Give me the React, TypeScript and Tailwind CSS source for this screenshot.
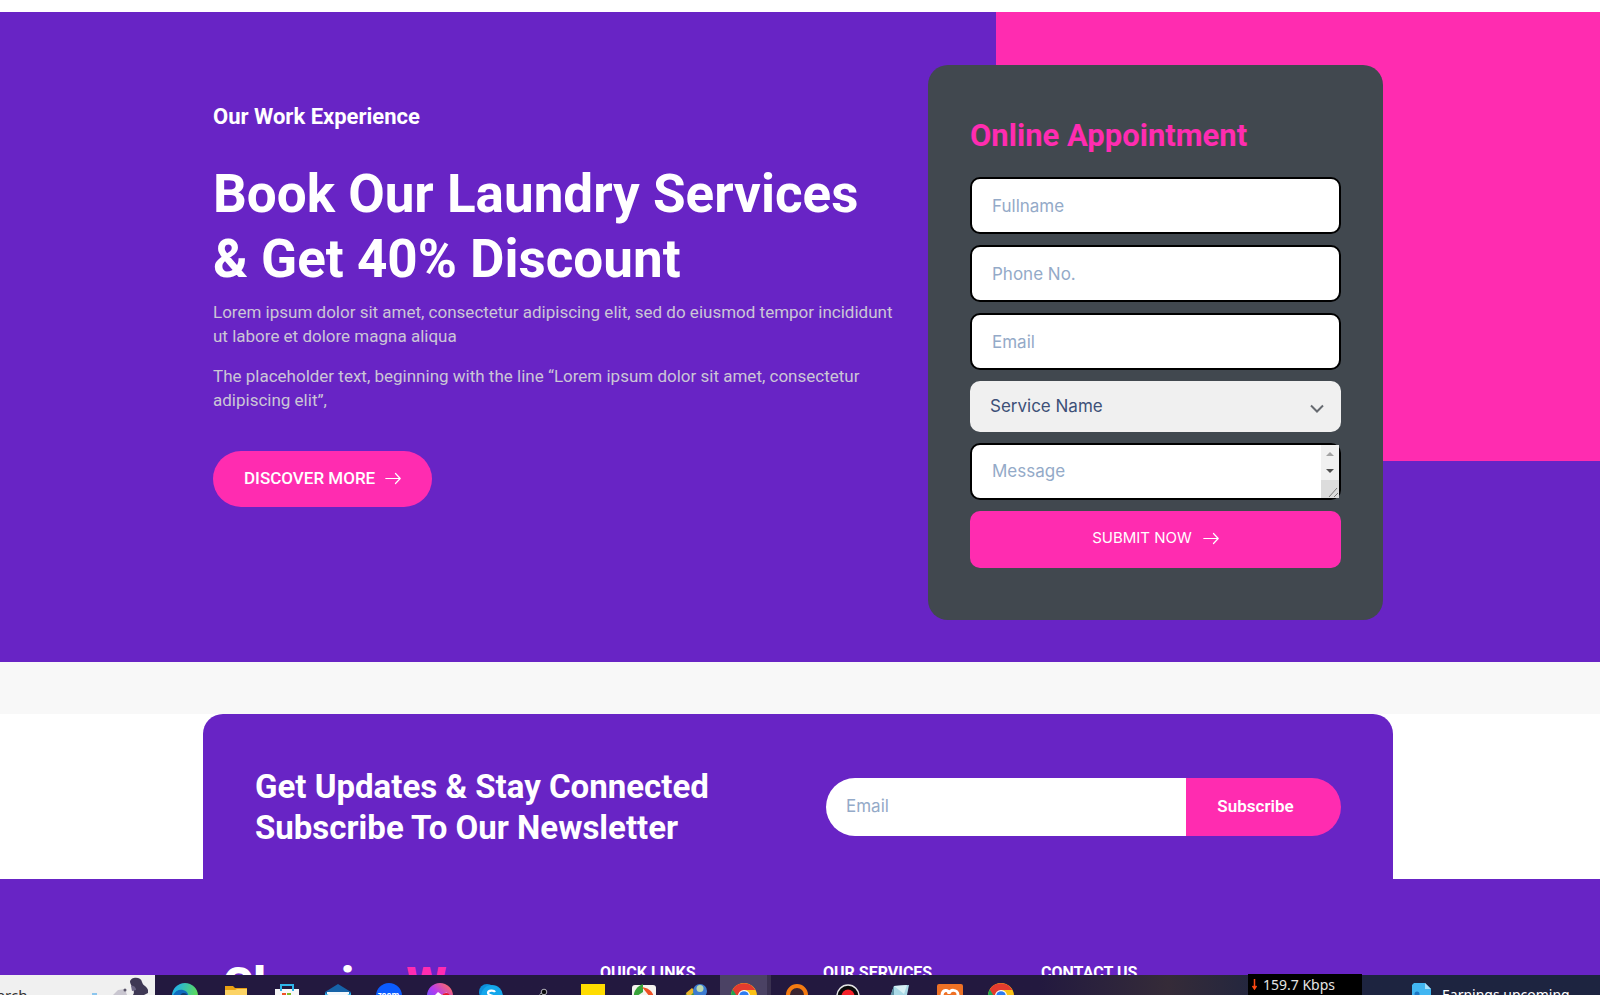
import type { ReactNode } from "react";

const fields = [
  { id: "fullname", label: "Fullname", type: "text" },
  { id: "phone", label: "Phone No.", type: "tel" },
  { id: "email", label: "Email", type: "email" },
];

const fieldClass =
  "block h-[57px] w-full rounded-[10px] border-2 border-black bg-white px-5 font-['Inter',sans-serif] text-[17px] text-[#3d5178] placeholder:text-[#94aac8] outline-none";

const Arrow = () => (
  <svg className="h-4 w-4" viewBox="0 0 16 16" fill="none" stroke="currentColor" strokeWidth="1.2" strokeLinecap="round" strokeLinejoin="round" aria-hidden="true">
    <path d="M0.8 7.500h14.2M10.500 2.500l4.700 5-4.700 5" />
  </svg>
);

const ChromeIcon = () => (
  <svg width="26" height="26" viewBox="0 0 26 26" aria-hidden="true">
    <circle cx="13" cy="13" r="13" fill="#fbc116" />
    <path d="M13 13 1.7 6.5A13 13 0 0 0 12 26l6.5-9.800z" fill="#1da453" />
    <path d="M1.700 6.500A13 13 0 0 1 24.300 7H13L7.800 16z" fill="#e33b2e" />
    <circle cx="13" cy="13" r="6" fill="#fff" />
    <circle cx="13" cy="13" r="4.800" fill="#2d7bf0" />
  </svg>
);

const taskIcons: { name: string; active?: boolean; art: ReactNode }[] = [
  {
    name: "Edge",
    art: (
      <svg width="26" height="26" viewBox="0 0 26 26" aria-hidden="true">
        <defs>
          <linearGradient id="edge" x1="0" y1="0" x2="1" y2="0.300">
            <stop offset="0.200" stopColor="#25b3e0" />
            <stop offset="1" stopColor="#5ddb5a" />
          </linearGradient>
        </defs>
        <circle cx="13" cy="13" r="13" fill="url(#edge)" />
        <path d="M0.500 14C2 8 7 6 11 7c4 1 6 4 5 8-2 5-8 8-13 6z" fill="#0f6cbf" />
        <path d="M8 14c0-3 2-4 4-4 3 0 4 3 3 5-2 3-7 3-7-1z" fill="#123f70" />
      </svg>
    ),
  },
  {
    name: "File Explorer",
    art: (
      <svg width="24" height="22" viewBox="0 0 24 22" className="mt-[3px]" aria-hidden="true">
        <path d="M1 0h8l2 2h12v6H1z" fill="#e9a012" />
        <path d="M1 4h10l2-1h10v18H1z" fill="#fcd365" />
      </svg>
    ),
  },
  {
    name: "Store",
    art: (
      <svg width="26" height="24" viewBox="0 0 26 24" className="mt-px" aria-hidden="true">
        <path d="M1 5h24v19H1z" fill="#f7f7f7" />
        <path d="M7 7V1h12v6" fill="none" stroke="#2fb5ea" strokeWidth="2" />
        <path d="M8 9h4v4H8z" fill="#f05125" />
        <path d="M13 9h4v4h-4z" fill="#7fba27" />
      </svg>
    ),
  },
  {
    name: "Mail",
    art: (
      <svg width="26" height="24" viewBox="0 0 26 24" className="mt-px" aria-hidden="true">
        <path d="M13 0 26 8v16H0V8z" fill="#1663a8" />
        <path d="M2 8h22v9H2z" fill="#f3f8fc" />
        <path d="M0 9l13 7 13-7v15H0z" fill="#38b7ee" />
      </svg>
    ),
  },
  {
    name: "Zoom",
    art: (
      <div className="h-[26px] w-[26px] rounded-full bg-[#0b5cff] pt-2 text-center text-[8px] leading-none font-bold text-white">zoom</div>
    ),
  },
  {
    name: "Messenger",
    art: (
      <svg width="26" height="26" viewBox="0 0 26 26" aria-hidden="true">
        <defs>
          <linearGradient id="msg" x1="0" y1="0.800" x2="0.800" y2="0">
            <stop offset="0" stopColor="#4b5cff" />
            <stop offset="0.500" stopColor="#b53af0" />
            <stop offset="1" stopColor="#ff6a65" />
          </linearGradient>
        </defs>
        <circle cx="13" cy="13" r="13" fill="url(#msg)" />
        <path d="M6 14l5-5 4 3 5-3-5 6-4-3z" fill="#fff" />
        <circle cx="19" cy="14" r="4" fill="#e6162d" />
      </svg>
    ),
  },
  {
    name: "Skype",
    art: (
      <svg width="24" height="24" viewBox="0 0 24 24" className="mt-px" aria-hidden="true">
        <circle cx="8" cy="8" r="8" fill="#0d8fdc" />
        <circle cx="13" cy="12" r="11" fill="#14a7ec" />
        <path d="M16 8c-1-2-7-2-7 1s7 2 7 5-6 3-7.500 0" fill="none" stroke="#fff" strokeWidth="2.200" />
      </svg>
    ),
  },
  {
    name: "Pen",
    art: (
      <svg width="24" height="20" viewBox="0 0 24 20" className="mt-[5px]" aria-hidden="true">
        <path d="M8 12 14 4" stroke="#d9d9df" strokeWidth="4" strokeLinecap="round" />
        <path d="M8 11 14 4" stroke="#0b0b0d" strokeWidth="2.500" strokeLinecap="round" />
        <circle cx="14" cy="4" r="2.800" fill="#0b0b0d" stroke="#d9d9df" strokeWidth="0.800" />
      </svg>
    ),
  },
  { name: "Notes", art: <div className="mt-px h-6 w-6 bg-[#ffdc00]" /> },
  {
    name: "Editor",
    art: (
      <svg width="24" height="24" viewBox="0 0 24 24" className="mt-px" aria-hidden="true">
        <rect y="1" width="24" height="23" rx="3" fill="#f5f3ef" />
        <path d="M11 0C4 3 1 8 2 14l9-6z" fill="#38a33a" />
        <path d="M10 3c6 1 11 4 12 11l-4-1z" fill="#ef5023" />
      </svg>
    ),
  },
  {
    name: "Download Manager",
    art: (
      <svg width="24" height="24" viewBox="0 0 24 24" className="mt-px" aria-hidden="true">
        <path d="M1 12l8-7 6 5-8 9z" fill="#3e9b42" />
        <path d="M3 9l6-5 3 3-7 7z" fill="#e8b52b" />
        <circle cx="17" cy="7" r="7" fill="#3c7bd0" />
        <circle cx="17" cy="4.500" r="3.500" fill="#bcd9b0" />
      </svg>
    ),
  },
  { name: "Chrome", active: true, art: <ChromeIcon /> },
  { name: "Recorder", art: <div className="mt-px h-6 w-[22px] rounded-full border-4 border-[#f47b11] bg-[#3a2430]" /> },
  {
    name: "Record",
    art: (
      <svg width="24" height="24" viewBox="0 0 24 24" className="mt-px" aria-hidden="true">
        <circle cx="12" cy="12" r="11" fill="#0a0a0a" stroke="#e5e5e5" strokeWidth="1.500" />
        <circle cx="12" cy="12" r="6.500" fill="#f5222a" />
      </svg>
    ),
  },
  {
    name: "Notepad",
    art: (
      <svg width="24" height="24" viewBox="0 0 24 24" className="mt-px" aria-hidden="true">
        <path d="M7 2l15-1-4 20H0z" fill="#a9d9e6" />
        <path d="M7 2l13-1-3 9z" fill="#d8f0f5" />
        <path d="M7 2 0 21h7z" fill="#5f93a6" />
      </svg>
    ),
  },
  {
    name: "XAMPP",
    art: (
      <svg width="26" height="24" viewBox="0 0 26 24" className="mt-px" aria-hidden="true">
        <rect width="26" height="24" rx="2" fill="#ee7125" />
        <path d="M5 12c0-7 7-7 7-2 0-5 9-5 9 1" fill="none" stroke="#fff" strokeWidth="3" />
      </svg>
    ),
  },
  { name: "Chrome profile", art: <ChromeIcon /> },
];

const Hero = () => (
  <section className="relative bg-[#6824c5] pt-[53px] pr-1 pb-[42px]">
    <div className="absolute top-0 right-0 h-[449px] w-[604px] bg-[#ff2cb0]" />
    <div className="relative mx-auto flex w-full max-w-[1190px] items-start justify-between px-[10px]">
      <div className="w-[680px] pt-9 text-white">
        <h4 className="text-[22px] leading-8 font-bold">Our Work Experience</h4>
        <h1 className="mt-[29px] text-[53px] leading-[65px] font-bold">
          Book Our Laundry Services
          <br />
          &amp; Get 40% Discount
        </h1>
        <div className="mt-2 space-y-4 text-[17px] leading-6 text-[#cbc6d6]">
          <p>Lorem ipsum dolor sit amet, consectetur adipiscing elit, sed do eiusmod tempor incididunt ut labore et dolore magna aliqua</p>
          <p>The placeholder text, beginning with the line “Lorem ipsum dolor sit amet, consectetur adipiscing elit”,</p>
        </div>
        <a href="#discover" className="mt-[39px] inline-flex h-14 items-center gap-[10px] rounded-full bg-[#ff2cb0] px-[31px] text-[17px] font-medium">
          DISCOVER MORE
          <Arrow />
        </a>
      </div>

      {/* Appointment form */}
      <form className="w-[455px] rounded-[20px] bg-[#41484f] px-[42px] pt-[50px] pb-[52px]" onSubmit={(e) => e.preventDefault()}>
        <h2 className="text-[31px] leading-[42px] font-bold text-[#ff2cb0]">Online Appointment</h2>
        <div className="mt-5 flex flex-col gap-[11px]">
          {fields.map((f) => (
            <input key={f.id} id={f.id} type={f.type} placeholder={f.label} aria-label={f.label} className={fieldClass} />
          ))}
          <div className="relative">
            <select aria-label="Service Name" className="block h-[51px] w-full appearance-none rounded-[10px] bg-[#f0f0f0] px-5 font-['Inter',sans-serif] text-[17px] text-[#3d5178] outline-none">
              <option>Service Name</option>
            </select>
            <svg className="pointer-events-none absolute top-[23px] right-[17px]" width="14" height="10" viewBox="0 0 14 10" fill="none" stroke="#666a70" strokeWidth="2" aria-hidden="true">
              <path d="M1 1.500l6 6 6-6" />
            </svg>
          </div>
          <div className="relative">
            <textarea placeholder="Message" aria-label="Message" className={fieldClass + " resize-none overflow-hidden py-[14px] leading-6"} />
            <svg className="pointer-events-none absolute top-[2px] right-[2px]" width="18" height="53" viewBox="0 0 18 53" aria-hidden="true">
              <path d="M0 0h18v53H0z" fill="#f1f1f1" />
              <path d="M0 35h18v18H0z" fill="#dcdcdc" />
              <path d="M5 11l4-4 4 4z" fill="#a3a3a3" />
              <path d="M5 24h8l-4 4z" fill="#505050" />
              <path d="M8 52l8-9M13 52l4-4" stroke="#7a7a7a" />
            </svg>
          </div>
          <button type="submit" className="flex h-[57px] w-full items-center justify-center gap-[11px] rounded-[10px] bg-[#ff2cb0] pb-[2px] font-['Inter',sans-serif] text-[15px] text-white">
            SUBMIT NOW
            <Arrow />
          </button>
        </div>
      </form>
    </div>
  </section>
);

const Newsletter = () => (
  <section className="bg-white pr-1">
    <div className="mx-auto flex w-full max-w-[1190px] items-center justify-between rounded-t-[20px] bg-[#6824c5] px-[52px] pt-[52px] pb-[31px]">
      <h2 className="text-[33px] leading-[41px] font-bold text-white">
        Get Updates &amp; Stay Connected
        <br />
        Subscribe To Our Newsletter
      </h2>
      <form className="flex h-[58px] w-[515px] overflow-hidden rounded-full" onSubmit={(e) => e.preventDefault()}>
        <input type="email" placeholder="Email" aria-label="Newsletter email" className="min-w-0 flex-1 bg-white px-5 font-['Inter',sans-serif] text-[17px] placeholder:text-[#94aac8] outline-none" />
        <button type="submit" className="w-[155px] bg-[#ff2cb0] pr-4 text-[17px] font-semibold text-white">Subscribe</button>
      </form>
    </div>
  </section>
);

const Footer = () => (
  <footer className="bg-[#6824c5] pt-[82px] pr-1 pb-20">
    <div className="mx-auto flex w-full max-w-[1190px] items-start px-5 font-bold text-white">
      <a href="#home" className="w-[377px] text-[46px] leading-[46px] font-black">
        Cleaning<span className="text-[#ff2cb0]">W</span>
      </a>
      <h5 className="w-[223px] leading-6">QUICK LINKS</h5>
      <h5 className="w-[218px] leading-6">OUR SERVICES</h5>
      <h5 className="leading-6">CONTACT US</h5>
    </div>
  </footer>
);

const Taskbar = () => (
  <nav aria-label="Taskbar" className="relative flex h-5 shrink-0 bg-linear-to-r from-[#23193f] from-65% via-[#352b38] via-73% to-[#1d2440] to-80% font-['Noto_Sans',sans-serif] text-white">
    <div className="flex h-full w-[155px] shrink-0 items-start justify-between overflow-hidden bg-[#f0f0f0] text-[#333]">
      <span className="-ml-5 mt-2 text-[15px] leading-6">Search</span>
      <svg width="66" height="20" viewBox="0 0 66 20" aria-hidden="true">
        <path d="M3 18h5v2H3z" fill="#8cc6ee" />
        <path d="M24 20l5-5 7-1 2 6z" fill="#c9c6d0" />
        <circle cx="36" cy="15" r="1.500" fill="#5b5569" />
        <path d="M41 7c0-5 11-6 12 0 1 4 5 4 6 8v3l-4 2H44c3-4-2-8-3-13z" fill="#3e3854" />
        <path d="M42 11c3-1 5 2 5 4l-4 1z" fill="#6d6685" />
      </svg>
    </div>
    <ul className="flex h-5 overflow-hidden pl-1">
      {taskIcons.map((t) => (
        <li key={t.name}>
          <button type="button" aria-label={t.name} className={t.active ? "flex h-12 w-[51px] items-start justify-center border-r-4 border-[#3a3150] bg-[#4b4264] pt-2" : "flex h-12 w-[51px] items-start justify-center pt-2"}>
            {t.art}
          </button>
        </li>
      ))}
    </ul>
    <div className="ml-auto flex h-5 w-[188px] items-start gap-[11px] overflow-hidden pt-2">
      <svg width="19" height="22" viewBox="0 0 19 22" className="shrink-0" aria-hidden="true">
        <path d="M2 0h11l6 6v16H0V2z" fill="#41b6f2" />
        <path d="M13 0l6 6h-6z" fill="#a5e0fb" />
        <circle cx="5" cy="11" r="2.500" fill="#1b76c4" />
      </svg>
      <span className="text-sm leading-6 whitespace-nowrap">Earnings upcoming</span>
    </div>

    {/* Network speed meter */}
    <div className="absolute -top-px right-[238px] flex h-[21px] w-[114px] items-center gap-[6px] overflow-hidden bg-black pl-1 text-sm leading-5 text-[#e4e4e4]">
      <svg width="5" height="11" viewBox="0 0 5 11" aria-hidden="true">
        <path d="M2.500 0v10M0.500 7l2 3 2-3" fill="none" stroke="#ff4a12" strokeWidth="1.500" />
      </svg>
      159.7 Kbps
    </div>
  </nav>
);

const App = () => {
  return (
    <div className="flex h-screen flex-col overflow-hidden bg-white font-['Roboto',sans-serif] text-base">
      <main className="min-h-0 flex-1 overflow-hidden pt-3">
        <Hero />
        <div className="h-[52px] bg-[#f8f8f8]" />
        <Newsletter />
        <Footer />
      </main>
      <Taskbar />
    </div>
  );
};

export default App;
